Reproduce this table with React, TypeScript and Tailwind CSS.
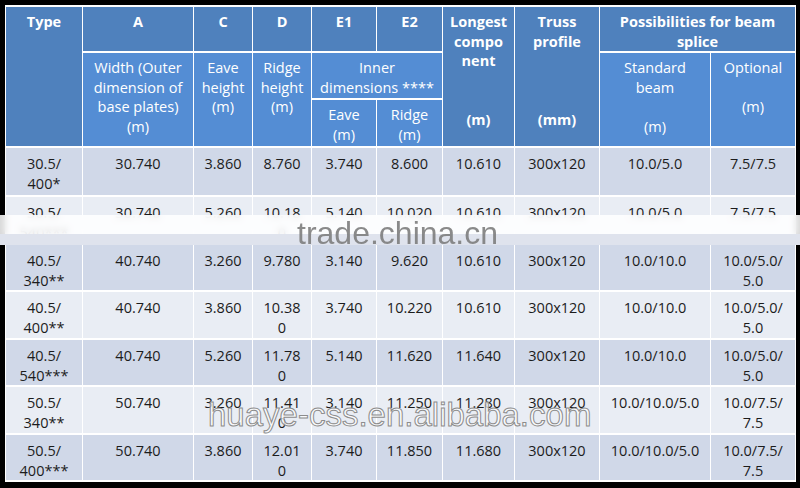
const ROWS: string[][] = [
  ['30.5/\n400*', '30.740', '3.860', '8.760', '3.740', '8.600', '10.610', '300x120', '10.0/5.0', '7.5/7.5'],
  ['30.5/\n540***', '30.740', '5.260', '10.18\n0', '5.140', '10.020', '10.610', '300x120', '10.0/5.0', '7.5/7.5'],
  ['40.5/\n340**', '40.740', '3.260', '9.780', '3.140', '9.620', '10.610', '300x120', '10.0/10.0', '10.0/5.0/\n5.0'],
  ['40.5/\n400**', '40.740', '3.860', '10.38\n0', '3.740', '10.220', '10.610', '300x120', '10.0/10.0', '10.0/5.0/\n5.0'],
  ['40.5/\n540***', '40.740', '5.260', '11.78\n0', '5.140', '11.620', '11.640', '300x120', '10.0/10.0', '10.0/5.0/\n5.0'],
  ['50.5/\n340**', '50.740', '3.260', '11.41\n0', '3.140', '11.250', '11.280', '300x120', '10.0/10.0/5.0', '10.0/7.5/\n7.5'],
  ['50.5/\n400***', '50.740', '3.860', '12.01\n0', '3.740', '11.850', '11.680', '300x120', '10.0/10.0/5.0', '10.0/7.5/\n7.5'],
]

const ROW_H = ['h-[49px]', 'h-[48px]', 'h-[47px]', 'h-[48px]', 'h-[47px]', 'h-[48px]', 'h-[47px]']

const dark = 'bg-[#4f81bd] font-bold'
const light = 'bg-[#548dd4] font-normal'
const cell = 'border-x border-y-2 border-white align-top px-1 pt-[5px] text-center whitespace-pre-line'

export default function App() {
  return (
    <div className="relative h-[488px] w-[800px] overflow-hidden bg-black p-[5px] font-['Open_Sans',sans-serif] text-[14.5px] leading-[19.5px]">
      <table className="w-[790px] table-fixed border-collapse">
        <colgroup>
          <col className="w-[77px]" />
          <col className="w-[111px]" />
          <col className="w-[59px]" />
          <col className="w-[59px]" />
          <col className="w-[65px]" />
          <col className="w-[66px]" />
          <col className="w-[72px]" />
          <col className="w-[85px]" />
          <col className="w-[111px]" />
          <col className="w-[85px]" />
        </colgroup>
        <thead className="text-white">
          <tr className="h-[46px]">
            <th rowSpan={3} className={`${cell} ${dark}`}>Type</th>
            <th className={`${cell} ${dark}`}>A</th>
            <th className={`${cell} ${dark}`}>C</th>
            <th className={`${cell} ${dark}`}>D</th>
            <th className={`${cell} ${dark}`}>E1</th>
            <th className={`${cell} ${dark}`}>E2</th>
            <th rowSpan={3} className={`${cell} ${dark}`}>{'Longest\ncompo\nnent\n\n\n(m)'}</th>
            <th rowSpan={3} className={`${cell} ${dark}`}>{'Truss\nprofile\n\n\n\n(mm)'}</th>
            <th colSpan={2} className={`${cell} ${dark}`}>{'Possibilities for beam\nsplice'}</th>
          </tr>
          <tr className="h-[47px]">
            <th rowSpan={2} className={`${cell} ${light}`}>{'Width (Outer\ndimension of\nbase plates)\n(m)'}</th>
            <th rowSpan={2} className={`${cell} ${light}`}>{'Eave\nheight\n(m)'}</th>
            <th rowSpan={2} className={`${cell} ${light}`}>{'Ridge\nheight\n(m)'}</th>
            <th colSpan={2} className={`${cell} ${light}`}>{'Inner\ndimensions ****'}</th>
            <th rowSpan={2} className={`${cell} ${light}`}>{'Standard\nbeam\n\n(m)'}</th>
            <th rowSpan={2} className={`${cell} ${light}`}>{'Optional\n\n(m)'}</th>
          </tr>
          <tr className="h-[48px]">
            <th className={`${cell} ${light}`}>{'Eave\n(m)'}</th>
            <th className={`${cell} ${light}`}>{'Ridge\n(m)'}</th>
          </tr>
        </thead>
        <tbody className="text-[#1c1c1c]">
          {ROWS.map((row, i) => (
            <tr key={i} className={`${ROW_H[i]} ${i % 2 === 0 ? 'bg-[#d0d8e8]' : 'bg-[#e9edf4]'}`}>
              {row.map((v, j) => (
                <td key={j} className={`${cell} pt-[6px]`}>
                  {v}
                </td>
              ))}
            </tr>
          ))}
        </tbody>
      </table>

      {/* watermark band */}
      <div className="absolute left-0 top-[215px] h-[20px] w-[800px] bg-white/85 backdrop-blur-[3px]" />
      <div className="absolute left-0 top-[234px] h-[11px] w-[800px] bg-[#dfe3ed]" />
      <div className="absolute left-[297px] top-[217px] font-['Liberation_Sans',sans-serif] text-[32px] leading-none text-[#7d7d7d]/90">
        trade.china.cn
      </div>
      <div className="absolute left-[208px] top-[398px] font-['Liberation_Sans',sans-serif] text-[33px] leading-none text-white/75 [-webkit-text-stroke:1px_#8c8c8c]">
        huaye-css.en.alibaba.com
      </div>
    </div>
  )
}
